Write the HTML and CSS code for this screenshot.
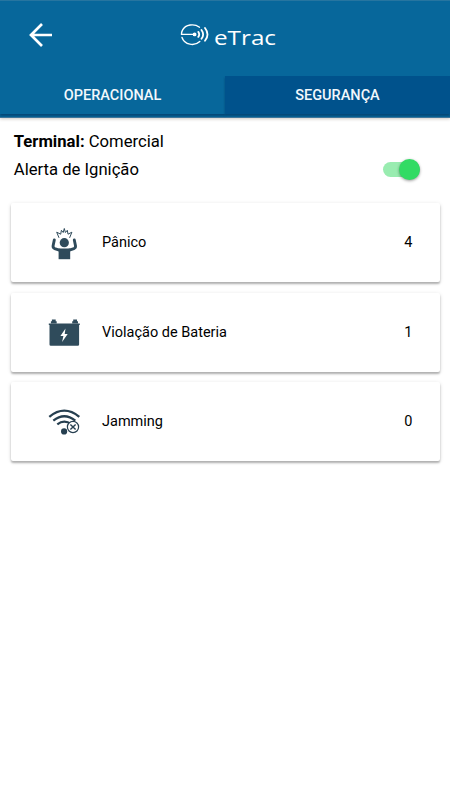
FILE: index.html
```html
<!DOCTYPE html>
<html lang="pt-BR">
<head>
<meta charset="utf-8">
<title>eTrac</title>
<link rel="stylesheet" href="styles.css">
</head>
<body>
<header class="header">
  <div class="toolbar">
    <svg class="back" viewBox="0 0 24 24" fill="none" stroke="#fff" stroke-width="2.7"><path d="M23 12H2M13 1L2 12l11 11"/></svg>
    <div class="brand">
      <svg class="logo" viewBox="0 0 30 24" fill="none" stroke="#fff" stroke-width="1.4" stroke-linecap="round">
        <path d="M19.5 4.2C14 .2 5.5 1.5 2.5 7.2q-1 1.8-1 4M2 14.5c2.5 7.5 12.5 9 17.8 4M1.5 11.4H14"/>
        <circle cx="14.6" cy="11.4" r="1.2" fill="#fff"/>
        <path d="M18.3 8.9q1.8 2.5 0 5M21.5 7q3.3 4.4 0 8.8M25 5q5 6.4 0 12.8" stroke-width="1.8"/>
      </svg>
      <svg class="wordmark" viewBox="0 0 68 32"><text x="1" y="22.5" textLength="62" lengthAdjust="spacingAndGlyphs">eTrac</text></svg>
    </div>
  </div>
  <nav class="tabs">
    <button class="tab">OPERACIONAL</button>
    <button class="tab active">SEGURANÇA</button>
  </nav>
</header>
<main class="content">
  <p class="terminal"><b>Terminal:</b> Comercial</p>
  <div class="setting">
    <span>Alerta de Ignição</span>
    <span class="toggle"><span class="knob"></span></span>
  </div>
  <section class="alerts">
    <article class="card">
      <svg class="icon" viewBox="0 0 34 34">
        <circle cx="17.3" cy="16.7" r="4.6" fill="#2f4b5b"/>
        <path d="M12 11.8l-2.3-5.6 4 2 .7-3.9 1.8 2.2 1.1-4 1.1 4 1.9-2.2.7 3.9 3.9-2-2.3 5.6" fill="none" stroke="#2f4b5b" stroke-width="1"/>
        <path d="M7.3 14l-1.2 5.8q-.3 2 1.6 2.8l5.3 1.8M27.3 14l1.2 5.8q.3 2-1.6 2.8l-5.3 1.8" fill="none" stroke="#2f4b5b" stroke-width="2.9" stroke-linecap="round" stroke-linejoin="round"/>
        <path d="M11.6 22.5h11.6v10.7H11.6z" fill="#2f4b5b"/>
      </svg>
      <span class="label">Pânico</span><span class="count">4</span>
    </article>
    <article class="card">
      <svg class="icon" viewBox="0 0 34 34" fill="#2f4b5b">
        <path d="M3.9 8.3V6.2h1V4.5h3.8v1.7h1v2.1zM25.2 8.3V6.2h1V4.5H30v1.7h1v2.1zM1.8 8.5h31V10h-.7v19.4q0 1.3-1.3 1.3H3.8q-1.3 0-1.3-1.3V10h-.7z"/>
        <path d="M18.5 13.5l-5.1 7.4h3l-1.3 6 5.6-7.8h-3z" fill="#fff"/>
      </svg>
      <span class="label">Violação de Bateria</span><span class="count">1</span>
    </article>
    <article class="card">
      <svg class="icon" viewBox="0 0 34 34" fill="none" stroke="#263f50" stroke-width="2.3">
        <path d="M2.3 11.8Q17.3-.5 32.3 11.8M6.3 15.6q11-8.8 22 0M10.3 19.4q7-5.5 14 0"/>
        <circle cx="17.1" cy="26.4" r="3.1" fill="#263f50" stroke="none"/>
        <circle cx="26" cy="22" r="5.6" fill="#fff" stroke-width="1.2"/>
        <path d="M23.4 19.4l5.2 5.2m0-5.2l-5.2 5.2" stroke-width="1.4"/>
      </svg>
      <span class="label">Jamming</span><span class="count">0</span>
    </article>
  </section>
</main>
</body>
</html>
```

FILE: styles.css
```css
* { box-sizing: border-box; }
body { margin: 0; height: 800px; background: #fff; color: #000; font-family: Roboto, "Liberation Sans", sans-serif; }
.header { height: 118px; background: #07679b; border-top: 1px solid #2675a0; border-bottom: 1px solid #40799e; box-shadow: 0 1px 3px rgba(60, 30, 10, .25); }
.toolbar { height: 75px; display: grid; grid-template-columns: 150px 1fr 150px; }
.back { width: 24px; height: 24px; margin: 22px 0 0 29px; }
.brand { display: flex; padding: 22px 0 0 30px; }
.logo { width: 30px; height: 24px; flex: none; }
.wordmark { width: 68px; height: 32px; margin: -1px 0 0 3px; flex: none; overflow: visible; }
.wordmark text { font: 19.5px "Open Sans", "Noto Sans", sans-serif; fill: #fff; }
.tabs { display: grid; grid-template-columns: 1fr 1fr; height: 38px; }
.tab { padding: 0; border: 0; background: #07679b; color: #f2f8fc; font: 500 14.5px/37px Roboto, sans-serif; box-shadow: 0 2px 2px rgba(0, 35, 75, .45); }
.tab.active { background: #00528c; }
.content { padding: 13px 10.5px; font-size: 16.65px; }
.terminal { margin: 0 3.3px; line-height: 22px; }
.setting { display: flex; align-items: center; justify-content: space-between; height: 32px; margin: 0 19.5px 0 3.3px; }
.toggle { display: flex; justify-content: flex-end; align-items: center; width: 37.5px; height: 15px; margin-top: 1px; border-radius: 8px; background: #99ecb0; }
.knob { width: 21px; height: 21px; flex: none; border-radius: 50%; background: #32db64; box-shadow: 0 1px 3px rgba(0, 0, 0, .4); }
.alerts { display: grid; gap: 10.5px; margin-top: 18px; }
.card { display: flex; align-items: center; height: 79px; padding: 0 27px 0 36.5px; border-radius: 2px; background: #fff; font-size: 14.5px; box-shadow: 0 2px 2px rgba(0, 0, 0, .25), 0 1px 4px rgba(0, 0, 0, .13); }
.icon { width: 34px; height: 34px; }
.label { flex: 1; margin-left: 21px; }
```
